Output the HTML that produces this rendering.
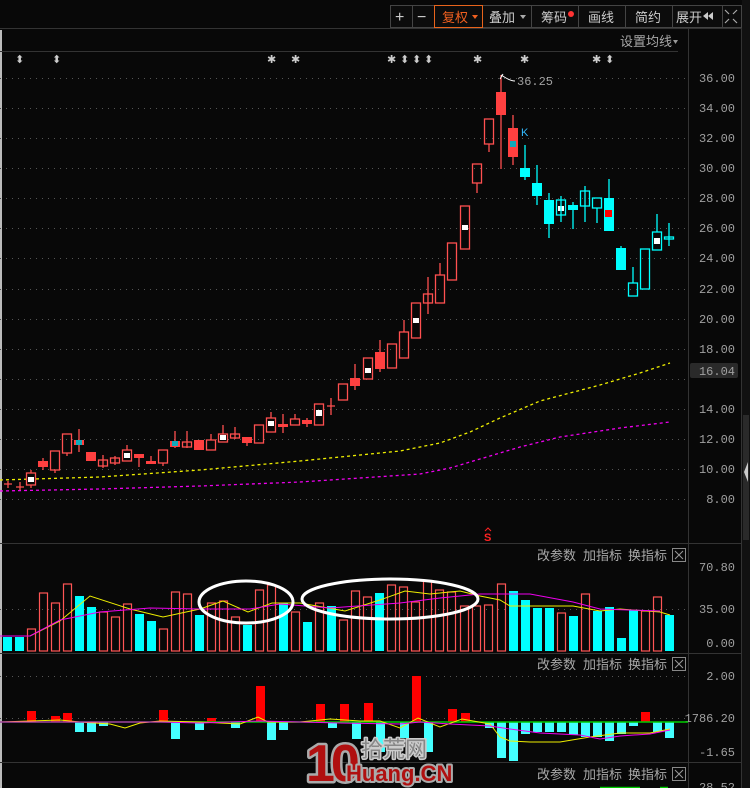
<!DOCTYPE html>
<html><head><meta charset="utf-8"><style>
html,body{margin:0;padding:0;background:#080808;width:750px;height:788px;overflow:hidden}
svg{display:block}
.ax{font-family:"Liberation Mono",monospace;font-size:12px;fill:#a0a0a0}
.cj{font-family:"Liberation Sans","Noto Sans CJK SC",sans-serif;font-size:13px;fill:#a8a8a8}
</style></head><body>
<svg width="750" height="788" viewBox="0 0 750 788" xmlns="http://www.w3.org/2000/svg">
<rect width="750" height="788" fill="#080808"/>
<rect x="0" y="30" width="2" height="758" fill="#bbb"/>
<rect x="742" y="0" width="8" height="788" fill="#111"/>
<rect x="743" y="415" width="6" height="125" fill="#2a2a2a"/>
<polygon points="748,462 744,472 748,482" fill="#ccc"/>
<line x1="0" y1="28.5" x2="742" y2="28.5" stroke="#333"/>
<rect x="390.5" y="5.5" width="351" height="22" fill="#0c0c0c" stroke="#444"/>
<g stroke="#444"><line x1="412.5" y1="6" x2="412.5" y2="27"/><line x1="434.5" y1="6" x2="434.5" y2="27"/><line x1="531.5" y1="6" x2="531.5" y2="27"/><line x1="578.5" y1="6" x2="578.5" y2="27"/><line x1="625.5" y1="6" x2="625.5" y2="27"/><line x1="672.5" y1="6" x2="672.5" y2="27"/><line x1="722.5" y1="6" x2="722.5" y2="27"/></g>
<rect x="434.5" y="5.5" width="48" height="22" fill="none" stroke="#e8641c"/>
<g font-family="Liberation Sans,Noto Sans CJK SC,sans-serif" font-size="13" fill="#ccc">
<text x="395" y="22" font-size="16">+</text><text x="417" y="22" font-size="16">−</text>
<text x="442" y="22" fill="#f06020">复权</text><polygon points="472,15 478,15 475,19" fill="#f06020"/>
<text x="489" y="22">叠加</text><polygon points="520,15 526,15 523,19" fill="#aaa"/>
<text x="541" y="22">筹码</text><circle cx="571" cy="14" r="3" fill="#f33"/>
<text x="588" y="22">画线</text><text x="635" y="22">简约</text>
<text x="676" y="22">展开</text><polygon points="708,12 703,16 708,20" fill="#ccc"/><polygon points="713,12 708,16 713,20" fill="#ccc"/>
<g stroke="#aaa" stroke-width="1.2"><path d="M725 10l4 4M737 10l-4 4M725 23l4-4M737 23l-4-4"/></g>
</g>
<line x1="0" y1="51.5" x2="678" y2="51.5" stroke="#333"/>
<text x="620" y="46" class="cj" fill="#999">设置均线</text><polygon points="673,40 678,40 675.5,44" fill="#999"/>
<g fill="#ccc" font-family="Liberation Sans,DejaVu Sans,sans-serif" font-size="11">
<text x="15" y="63">⬍</text><text x="52" y="63">⬍</text>
<text x="267" y="63">✱</text><text x="291" y="63">✱</text>
<text x="387" y="63">✱</text><text x="400" y="63">⬍</text><text x="412" y="63">⬍</text><text x="424" y="63">⬍</text>
<text x="473" y="63">✱</text><text x="520" y="63">✱</text><text x="592" y="63">✱</text><text x="605" y="63">⬍</text>
</g>
<line x1="688.5" y1="29" x2="688.5" y2="788" stroke="#333"/>
<line x1="741.5" y1="29" x2="741.5" y2="788" stroke="#333"/>
<g stroke="#555" stroke-dasharray="1 5">
<line x1="0" y1="78.5" x2="688" y2="78.5"/><line x1="0" y1="108.5" x2="688" y2="108.5"/><line x1="0" y1="138.5" x2="688" y2="138.5"/><line x1="0" y1="168.5" x2="688" y2="168.5"/><line x1="0" y1="198.5" x2="688" y2="198.5"/><line x1="0" y1="228.5" x2="688" y2="228.5"/><line x1="0" y1="258.5" x2="688" y2="258.5"/><line x1="0" y1="289.5" x2="688" y2="289.5"/><line x1="0" y1="319.5" x2="688" y2="319.5"/><line x1="0" y1="349.5" x2="688" y2="349.5"/><line x1="0" y1="379.5" x2="688" y2="379.5"/><line x1="0" y1="409.5" x2="688" y2="409.5"/><line x1="0" y1="439.5" x2="688" y2="439.5"/><line x1="0" y1="469.5" x2="688" y2="469.5"/><line x1="0" y1="499.5" x2="688" y2="499.5"/>
<line x1="0" y1="609.5" x2="688" y2="609.5"/><line x1="0" y1="676.5" x2="688" y2="676.5"/><line x1="0" y1="718.5" x2="688" y2="718.5"/><line x1="0" y1="762.5" x2="688" y2="762.5"/>
</g>
<g class="ax" text-anchor="end">
<text x="735" y="82">36.00</text><text x="735" y="112">34.00</text><text x="735" y="142">32.00</text><text x="735" y="172">30.00</text><text x="735" y="202">28.00</text><text x="735" y="232">26.00</text><text x="735" y="262">24.00</text><text x="735" y="293">22.00</text><text x="735" y="323">20.00</text><text x="735" y="353">18.00</text><text x="735" y="413">14.00</text><text x="735" y="443">12.00</text><text x="735" y="473">10.00</text><text x="735" y="503">8.00</text>
</g>
<rect x="690" y="363" width="48" height="15" rx="2" fill="#2a2a2a"/>
<text x="735" y="375" class="ax" text-anchor="end" fill="#eee">16.04</text>
<polyline fill="none" stroke="#ee0" stroke-width="1.3" stroke-dasharray="3 3" points="0,480 100,477 200,470 300,461 400,451 440,443 470,432 500,418 540,401 600,385 640,373 670,363"/>
<polyline fill="none" stroke="#e0e" stroke-width="1.3" stroke-dasharray="3 3" points="0,491 100,489 200,486 300,482 420,474 450,468 480,459 520,447 560,437 620,428 670,422"/>
<g stroke="#ff5050" stroke-width="1.3" fill="none">
<path d="M8 481V488M4 484H12M20 482V490M16 487H24M31 470V473M31 485V488M43 458V470M55 470V473M67 453V456M79 429V452M103 455V468M115 456V465M127 445V450M139 458V467M151 456V461M163 463V466M175 431V448M187 431V448M211 434V440M223 425V434M235 427V439M247 443V446M271 412V418M283 414V433M279 425H287M295 414V419M307 418V427M331 398V415M327 406H335M355 364V390M380 340V372M404 320V332M428 277V314M440 263V275M477 183V193M489 144V152M501 75V169M513 115V165"/>
<rect x="26.5" y="473" width="9" height="12"/><rect x="50.5" y="451" width="9" height="19"/><rect x="62.5" y="434" width="9" height="19"/><rect x="98.5" y="460" width="9" height="6"/><rect x="110.5" y="458" width="9" height="5"/><rect x="122.5" y="450" width="9" height="11"/><rect x="158.5" y="450" width="9" height="13"/><rect x="182.5" y="442" width="9" height="5"/><rect x="206.5" y="440" width="9" height="10"/><rect x="218.5" y="434" width="9" height="8"/><rect x="230.5" y="434" width="9" height="4"/><rect x="254.5" y="425" width="9" height="18"/><rect x="266.5" y="418" width="9" height="14"/><rect x="290.5" y="419" width="9" height="6"/><rect x="314.5" y="404" width="9" height="21"/><rect x="338.5" y="384" width="9" height="16"/><rect x="363.5" y="358" width="9" height="21"/><rect x="387.5" y="344" width="9" height="24"/><rect x="399.5" y="332" width="9" height="26"/><rect x="411.5" y="303" width="9" height="35"/><rect x="423.5" y="294" width="9" height="9"/><rect x="435.5" y="275" width="9" height="28"/><rect x="447.5" y="243" width="9" height="37"/><rect x="460.5" y="206" width="9" height="43"/><rect x="472.5" y="164" width="9" height="19"/><rect x="484.5" y="119" width="9" height="25"/>
</g>
<g fill="#ff4040">
<rect x="38" y="461" width="10" height="6"/><rect x="74" y="440" width="10" height="5"/><rect x="86" y="452" width="10" height="9"/><rect x="134" y="454" width="10" height="4"/><rect x="146" y="461" width="10" height="3"/><rect x="170" y="441" width="10" height="6"/><rect x="194" y="440" width="10" height="10"/><rect x="242" y="437" width="10" height="6"/><rect x="278" y="424" width="10" height="3"/><rect x="302" y="420" width="10" height="4"/><rect x="350" y="378" width="10" height="8"/><rect x="375" y="352" width="10" height="17"/><rect x="496" y="92" width="10" height="23"/><rect x="508" y="128" width="10" height="29"/>
</g>
<g fill="#fff"><rect x="28" y="477" width="6" height="5"/><rect x="124" y="453" width="6" height="5"/><rect x="220" y="435" width="6" height="5"/><rect x="268" y="421" width="6" height="5"/><rect x="316" y="410" width="6" height="6"/><rect x="365" y="368" width="6" height="5"/><rect x="413" y="318" width="6" height="5"/><rect x="462" y="225" width="6" height="5"/><rect x="558" y="206" width="6" height="5"/><rect x="654" y="238" width="6" height="6"/></g>
<g fill="#1ab"><rect x="76" y="440" width="6" height="5"/><rect x="172" y="441" width="6" height="5"/><rect x="510" y="141" width="6" height="6"/></g>
<g stroke="#0ff" stroke-width="1.3" fill="none">
<path d="M525 145V180M537 165V205M549 193V238M561 196V222M573 202V229M585 186V222M597 208V223M609 179V198M621 246V248M633 267V283M657 214V232M669 223V246"/>
<rect x="556.5" y="200" width="9" height="15"/><rect x="580.5" y="191" width="9" height="15"/><rect x="592.5" y="198" width="9" height="10"/><rect x="628.5" y="283" width="9" height="13"/><rect x="640.5" y="249" width="9" height="40"/><rect x="652.5" y="232" width="9" height="18"/><rect x="664.5" y="237" width="9" height="2"/>
</g>
<g fill="#0ff"><rect x="520" y="168" width="10" height="9"/><rect x="532" y="183" width="10" height="13"/><rect x="544" y="200" width="10" height="24"/><rect x="568" y="205" width="10" height="5"/><rect x="604" y="198" width="10" height="33"/><rect x="616" y="248" width="10" height="22"/></g>
<rect x="605" y="210" width="7" height="7" fill="#f00"/>
<path d="M501 75l5 3M503 74l-3 5" stroke="#fff" stroke-width="1"/><path d="M506 78q5 3 9 3" stroke="#fff" fill="none"/>
<text x="517" y="85" class="ax" fill="#fff" font-size="11">36.25</text>
<text x="521" y="136" font-family="Liberation Sans,sans-serif" font-size="11" fill="#3bf">K</text>
<text x="484" y="541" font-family="Liberation Sans,sans-serif" font-size="11" font-weight="bold" fill="#f22">S</text><path d="M485 531l3-3 3 3" stroke="#f22" fill="none"/>
<line x1="0" y1="543.5" x2="742" y2="543.5" stroke="#333"/>
<g class="cj"><text x="537" y="560">改参数</text><text x="583" y="560">加指标</text><text x="628" y="560">换指标</text></g>
<rect x="672.5" y="548.5" width="13" height="13" fill="none" stroke="#888"/><path d="M675 551l8 8M683 551l-8 8" stroke="#999"/>
<g class="ax" text-anchor="end"><text x="735" y="571">70.80</text><text x="735" y="613">35.00</text><text x="735" y="647">0.00</text></g>
<g fill="#0ff"><rect x="3" y="637" width="9" height="14"/><rect x="15" y="637" width="9" height="14"/><rect x="75" y="596" width="9" height="55"/><rect x="87" y="607" width="9" height="44"/><rect x="135" y="614" width="9" height="37"/><rect x="147" y="621" width="9" height="30"/><rect x="195" y="615" width="9" height="36"/><rect x="243" y="625" width="9" height="26"/><rect x="279" y="603" width="9" height="48"/><rect x="303" y="622" width="9" height="29"/><rect x="327" y="606" width="9" height="45"/><rect x="375" y="593" width="9" height="58"/><rect x="509" y="591" width="9" height="60"/><rect x="521" y="600" width="9" height="51"/><rect x="533" y="608" width="9" height="43"/><rect x="545" y="608" width="9" height="43"/><rect x="569" y="616" width="9" height="35"/><rect x="593" y="611" width="9" height="40"/><rect x="605" y="607" width="9" height="44"/><rect x="617" y="638" width="9" height="13"/><rect x="629" y="610" width="9" height="41"/><rect x="665" y="615" width="9" height="36"/></g>
<g fill="none" stroke="#f55" stroke-width="1.2"><rect x="27.5" y="629" width="8" height="22"/><rect x="39.5" y="593" width="8" height="58"/><rect x="51.5" y="603" width="8" height="48"/><rect x="63.5" y="584" width="8" height="67"/><rect x="99.5" y="612" width="8" height="39"/><rect x="111.5" y="617" width="8" height="34"/><rect x="123.5" y="604" width="8" height="47"/><rect x="159.5" y="629" width="8" height="22"/><rect x="171.5" y="592" width="8" height="59"/><rect x="183.5" y="594" width="8" height="57"/><rect x="207.5" y="603" width="8" height="48"/><rect x="219.5" y="601" width="8" height="50"/><rect x="231.5" y="617" width="8" height="34"/><rect x="255.5" y="590" width="8" height="61"/><rect x="267.5" y="585" width="8" height="66"/><rect x="291.5" y="612" width="8" height="39"/><rect x="315.5" y="603" width="8" height="48"/><rect x="339.5" y="620" width="8" height="31"/><rect x="351.5" y="591" width="8" height="60"/><rect x="363.5" y="597" width="8" height="54"/><rect x="387.5" y="585" width="8" height="66"/><rect x="399.5" y="587" width="8" height="64"/><rect x="411.5" y="602" width="8" height="49"/><rect x="423.5" y="581" width="8" height="70"/><rect x="435.5" y="590" width="8" height="61"/><rect x="447.5" y="592" width="8" height="59"/><rect x="460.5" y="606" width="8" height="45"/><rect x="472.5" y="606" width="8" height="45"/><rect x="484.5" y="605" width="8" height="46"/><rect x="497.5" y="584" width="8" height="67"/><rect x="557.5" y="613" width="8" height="38"/><rect x="581.5" y="594" width="8" height="57"/><rect x="641.5" y="611" width="8" height="40"/><rect x="653.5" y="597" width="8" height="54"/></g>
<polyline fill="none" stroke="#ee0" stroke-width="1" points="0,636 30,636 60,621 90,596 130,609 163,617 200,609 223,601 248,612 272,603 300,603 345,611 380,600 405,591 430,594 460,591 480,596 500,600 510,606 540,606 573,606 600,611 620,609 660,612 670,615"/>
<polyline fill="none" stroke="#e0e" stroke-width="1" points="0,636 30,636 60,620 100,612 150,608 200,609 250,609 280,604 330,608 400,603 440,598 480,594 530,594 573,602 600,609 660,611"/>
<ellipse cx="246" cy="602" rx="47" ry="21" fill="none" stroke="#fff" stroke-width="3"/>
<ellipse cx="390" cy="599" rx="88" ry="20" fill="none" stroke="#fff" stroke-width="3"/>
<line x1="0" y1="653.5" x2="742" y2="653.5" stroke="#333"/>
<g class="cj"><text x="537" y="669">改参数</text><text x="583" y="669">加指标</text><text x="628" y="669">换指标</text></g>
<rect x="672.5" y="657.5" width="13" height="13" fill="none" stroke="#888"/><path d="M675 660l8 8M683 660l-8 8" stroke="#999"/>
<g class="ax" text-anchor="end"><text x="735" y="680">2.00</text><text x="735" y="722">1786.20</text><text x="735" y="756">-1.65</text></g>
<g fill="#f00"><rect x="27" y="711" width="9" height="11"/><rect x="51" y="716" width="9" height="6"/><rect x="63" y="713" width="9" height="9"/><rect x="159" y="710" width="9" height="12"/><rect x="207" y="718" width="9" height="4"/><rect x="256" y="686" width="9" height="36"/><rect x="316" y="704" width="9" height="18"/><rect x="340" y="704" width="9" height="18"/><rect x="364" y="703" width="9" height="19"/><rect x="412" y="676" width="9" height="46"/><rect x="448" y="709" width="9" height="13"/><rect x="461" y="713" width="9" height="9"/><rect x="641" y="712" width="9" height="10"/></g>
<g fill="#4ff"><rect x="75" y="722" width="9" height="10"/><rect x="87" y="722" width="9" height="10"/><rect x="99" y="722" width="9" height="4"/><rect x="171" y="722" width="9" height="17"/><rect x="195" y="722" width="9" height="8"/><rect x="231" y="722" width="9" height="6"/><rect x="267" y="722" width="9" height="18"/><rect x="279" y="722" width="9" height="8"/><rect x="328" y="722" width="9" height="6"/><rect x="352" y="722" width="9" height="17"/><rect x="376" y="722" width="9" height="30"/><rect x="400" y="722" width="9" height="16"/><rect x="424" y="722" width="9" height="30"/><rect x="485" y="722" width="9" height="6"/><rect x="497" y="722" width="9" height="36"/><rect x="509" y="722" width="9" height="39"/><rect x="521" y="722" width="9" height="12"/><rect x="533" y="722" width="9" height="10"/><rect x="545" y="722" width="9" height="10"/><rect x="557" y="722" width="9" height="10"/><rect x="569" y="722" width="9" height="13"/><rect x="581" y="722" width="9" height="15"/><rect x="593" y="722" width="9" height="15"/><rect x="605" y="722" width="9" height="19"/><rect x="617" y="722" width="9" height="12"/><rect x="629" y="722" width="9" height="4"/><rect x="653" y="722" width="9" height="10"/><rect x="665" y="722" width="9" height="16"/></g>
<line x1="0" y1="722" x2="688" y2="722" stroke="#0c0" stroke-width="1.5"/>
<polyline fill="none" stroke="#ee0" stroke-width="1" points="0,722 60,720 80,722 110,724 125,728 140,723 160,721 200,722 240,724 258,717 268,722 300,722 330,719 360,721 380,721 400,728 418,718 440,727 462,719 490,724 500,737 510,741 530,742 560,742 590,737 620,733 650,733 670,729"/>
<polyline fill="none" stroke="#e0e" stroke-width="1" points="0,722 100,722 160,722 200,723 260,721 300,722 340,723 400,724 420,722 450,724 490,726 510,729 540,733 580,735 600,739 620,736 650,734 670,730"/>
<line x1="0" y1="762.5" x2="742" y2="762.5" stroke="#333"/>
<g class="cj"><text x="537" y="779">改参数</text><text x="583" y="779">加指标</text><text x="628" y="779">换指标</text></g>
<rect x="672.5" y="767.5" width="13" height="13" fill="none" stroke="#888"/><path d="M675 770l8 8M683 770l-8 8" stroke="#999"/>
<text x="735" y="791" class="ax" text-anchor="end">28.52</text>
<path d="M600 787.5H640M660 787.5H668" stroke="#0c0" stroke-width="1.5"/>
<g font-family="Liberation Sans,Noto Sans CJK SC,sans-serif" font-weight="bold" stroke="#aaa" stroke-width="5" paint-order="stroke" stroke-linejoin="round">
<text x="306" y="781" font-size="52" fill="#b01010" letter-spacing="-4">10</text>
<text x="361" y="757" font-size="22" fill="#888" stroke="#ccc" stroke-width="3" font-weight="normal">拾荒网</text>
<text x="346" y="781" font-size="22" fill="#b01010" stroke-width="4">Huang.CN</text>
</g>
</svg>
</body></html>
